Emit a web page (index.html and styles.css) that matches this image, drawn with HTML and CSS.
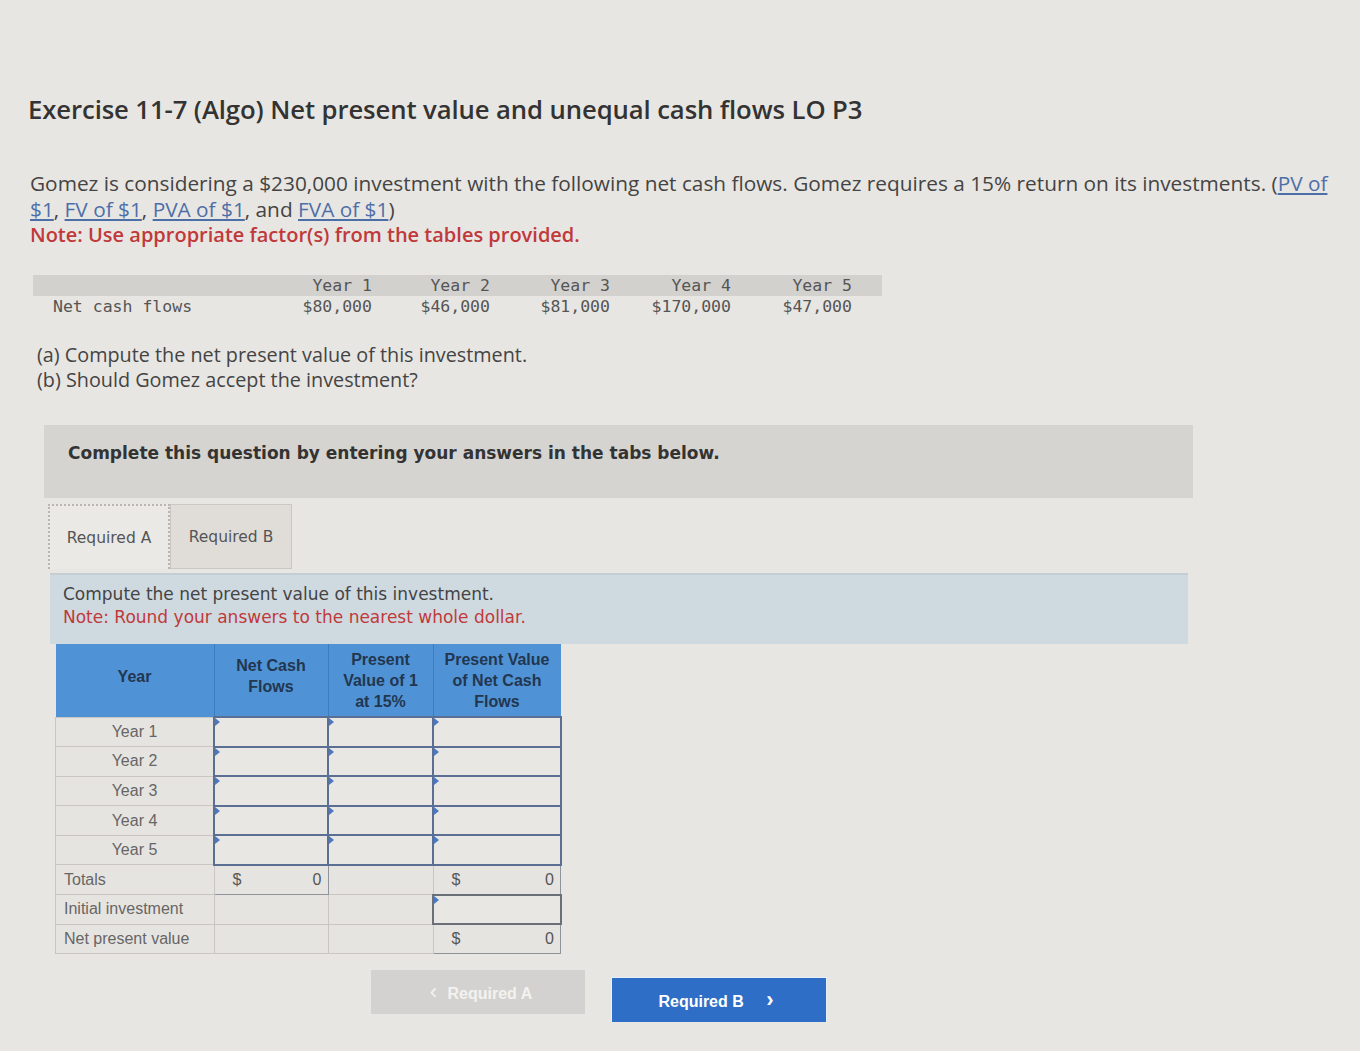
FILE: index.html
```html
<!DOCTYPE html>
<html>
<head>
<meta charset="utf-8">
<link rel="stylesheet" href="styles.css">
</head>
<body>
<div class="page">
  <h1 class="title">Exercise 11-7 (Algo) Net present value and unequal cash flows LO P3</h1>
  <div class="intro">
    <p>Gomez is considering a $230,000 investment with the following net cash flows. Gomez requires a 15% return on its investments. (<a>PV of<br>$1</a>, <a>FV of $1</a>, <a>PVA of $1</a>, and <a>FVA of $1</a>)</p>
    <p class="note">Note: Use appropriate factor(s) from the tables provided.</p>
  </div>

  <div class="flows">
    <div class="flows-head">
      <span class="lbl"></span><span>Year 1</span><span>Year 2</span><span>Year 3</span><span>Year 4</span><span>Year 5</span>
    </div>
    <div class="flows-row">
      <span class="lbl">Net cash flows</span><span>$80,000</span><span>$46,000</span><span>$81,000</span><span>$170,000</span><span>$47,000</span>
    </div>
  </div>

  <div class="questions">
    <p>(a) Compute the net present value of this investment.</p>
    <p>(b) Should Gomez accept the investment?</p>
  </div>

  <div class="complete">Complete this question by entering your answers in the tabs below.</div>

  <div class="tabs">
    <div class="tab active">Required A</div>
    <div class="tab">Required B</div>
  </div>

  <div class="instr">
    <p>Compute the net present value of this investment.</p>
    <p class="note2">Note: Round your answers to the nearest whole dollar.</p>
  </div>

  <table class="npv">
    <thead>
      <tr>
        <th class="c1"><span class="up">Year</span></th>
        <th class="c2"><span class="up">Net Cash<br>Flows</span></th>
        <th class="c3">Present<br>Value of 1<br>at 15%</th>
        <th class="c4">Present Value<br>of Net Cash<br>Flows</th>
      </tr>
    </thead>
    <tbody>
      <tr><td class="yr">Year 1</td><td class="inp"></td><td class="inp"></td><td class="inp"></td></tr>
      <tr><td class="yr">Year 2</td><td class="inp"></td><td class="inp"></td><td class="inp"></td></tr>
      <tr><td class="yr">Year 3</td><td class="inp"></td><td class="inp"></td><td class="inp"></td></tr>
      <tr><td class="yr">Year 4</td><td class="inp"></td><td class="inp"></td><td class="inp"></td></tr>
      <tr><td class="yr">Year 5</td><td class="inp"></td><td class="inp"></td><td class="inp"></td></tr>
      <tr><td class="lab">Totals</td><td class="val"><span>$</span><span>0</span></td><td></td><td class="val"><span>$</span><span>0</span></td></tr>
      <tr><td class="lab">Initial investment</td><td></td><td></td><td class="inp box"></td></tr>
      <tr><td class="lab">Net present value</td><td></td><td></td><td class="val"><span>$</span><span>0</span></td></tr>
    </tbody>
  </table>

  <div class="nav">
    <button class="btn prev"><span class="chev">&lsaquo;</span> Required A</button>
    <button class="btn next">Required B <span class="chev">&rsaquo;</span></button>
  </div>
</div>
</body>
</html>
```

FILE: styles.css
```css
html, body {
  margin: 0;
  padding: 0;
  background: #e8e6e2;
}
body {
  font-family: "Open Sans", Lato, sans-serif;
  color: #3c3c3c;
}
.page {
  padding: 92px 0 0 28px;
  width: 1310px;
}
.title {
  margin: 0;
  font-size: 25.7px;
  font-weight: 600;
  color: #333;
  letter-spacing: -0.1px;
}
.intro {
  margin-top: 43px;
  padding-left: 2px;
}
.intro p {
  margin: 0;
  font-size: 20.8px;
  line-height: 26px;
  color: #444;
}
.intro a {
  color: #4d6fa8;
  text-decoration: underline;
}
.intro .note {
  font-size: 20px;
  color: #c0393b;
  font-weight: 600;
}
.flows {
  margin-top: 27px;
  margin-left: 5px;
  font-family: "DejaVu Sans Mono", monospace;
  font-size: 16.5px;
  color: #555;
  width: 849px;
}
.flows-head, .flows-row {
  display: grid;
  grid-template-columns: 230px 109px 118px 120px 121px 121px;
  height: 21px;
  line-height: 21px;
}
.flows-head {
  background: #d3d1ce;
}
.flows-row {
  height: 22px;
}
.flows span {
  text-align: right;
}
.flows .lbl {
  text-align: left;
  padding-left: 20px;
}
.questions {
  margin-top: 24px;
  margin-left: 9px;
}
.questions p {
  margin: 0;
  font-size: 19.8px;
  line-height: 25px;
  color: #444;
}
.complete {
  margin-top: 33px;
  margin-left: 16px;
  width: 1149px;
  height: 73px;
  background: #d6d4d0;
  font-family: "DejaVu Sans", sans-serif;
  font-weight: 700;
  font-size: 17px;
  color: #333;
  padding-left: 24px;
  padding-top: 18px;
  box-sizing: border-box;
}
.tabs {
  display: flex;
  margin-top: 6px;
  margin-left: 20px;
}
.tab {
  width: 122px;
  height: 65px;
  box-sizing: border-box;
  background: #e0ddd8;
  border: 1px solid #cbc8c3;
  font-family: "DejaVu Sans", sans-serif;
  font-size: 15.5px;
  color: #555;
  display: flex;
  align-items: center;
  justify-content: center;
}
.tab.active {
  background: #ebe9e5;
  border: 2px dotted #b9b6b1;
  border-bottom: none;
}
.instr {
  margin-top: 4px;
  margin-left: 22px;
  width: 1138px;
  height: 71px;
  background: #cfd9e0;
  padding: 8px 0 0 13px;
  box-sizing: border-box;
  border-top: 2px solid #c4cdd3;
}
.instr p {
  margin: 0;
  font-family: "DejaVu Sans", sans-serif;
  font-size: 17px;
  line-height: 23px;
  color: #444;
}
.instr .note2 {
  color: #c0393b;
}
.npv {
  margin-left: 27px;
  border-collapse: collapse;
  font-family: "Liberation Sans", Arial, sans-serif;
  font-size: 16px;
  color: #555;
}
.npv th {
  background: #4f93d6;
  color: #23364f;
  font-weight: 700;
  height: 72px;
  line-height: 21px;
  padding: 0;
  border-left: 1px solid #3d7cbd;
  vertical-align: middle;
}
.npv th .up {
  position: relative;
  top: -4px;
}
.npv th.c1 { width: 158px; border-left: none; }
.npv th.c2 { width: 113px; }
.npv th.c3 { width: 104px; }
.npv th.c4 { width: 127px; }
.npv td {
  height: 27.6px;
  padding: 0;
  border: 1px solid #c9c6c1;
  background: #e6e4e0;
}
.npv td.yr {
  text-align: center;
  color: #666;
}
.npv td.lab {
  padding-left: 8px;
  color: #666;
}
.npv td.inp {
  position: relative;
  border: 2px solid #5a6f93;
  background: #e9e7e3;
}
.npv td.inp::before {
  content: "";
  position: absolute;
  left: 0;
  top: 0;
  border-left: 5px solid #4b78c2;
  border-top: 4px solid transparent;
  border-bottom: 4px solid transparent;
}
.npv td.box {
  border: 2px solid #6a6f78;
}
.npv td.val {
  border: 1px solid #8f939b;
}
.npv td.val span:first-child {
  float: left;
  padding-left: 18px;
  color: #555;
}
.npv td.val span:last-child {
  float: right;
  padding-right: 6px;
}
.nav {
  display: flex;
  gap: 27px;
  margin-top: 16px;
  margin-left: 343px;
  align-items: flex-start;
}
.btn {
  width: 214px;
  height: 44px;
  border: none;
  font-family: "Liberation Sans", Arial, sans-serif;
  font-weight: 700;
  font-size: 16px;
}
.btn.prev {
  background: #d3d2d0;
  color: #f3f2ef;
}
.btn.next {
  margin-top: 8px;
  background: #2e6ec6;
  color: #ffffff;
  box-shadow: 0 0 0 1px #e6f0fb;
}
.chev {
  font-size: 22px;
  margin: 0 6px;
  font-weight: 400;
}
.btn.next .chev { margin-left: 18px; font-weight: 700; }
```
